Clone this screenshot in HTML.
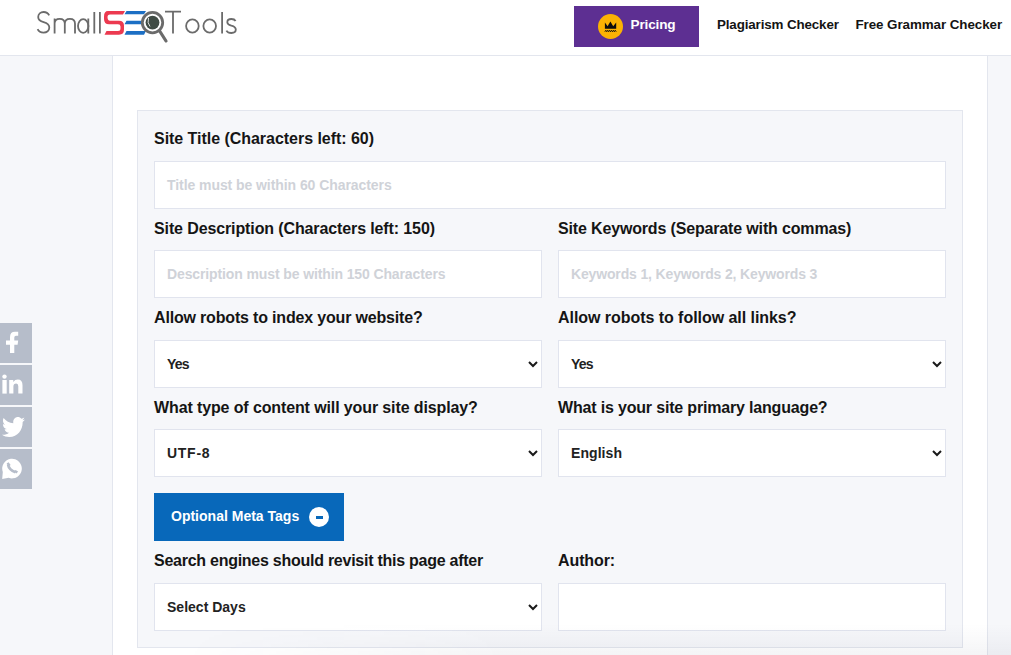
<!DOCTYPE html>
<html><head><meta charset="utf-8">
<style>
*{box-sizing:border-box;margin:0;padding:0}
html,body{width:1011px;height:655px;overflow:hidden;background:#f6f7fa;font-family:"Liberation Sans",sans-serif;color:#1b1b1b}
.abs{position:absolute}
#hdr{position:absolute;left:0;top:0;width:1011px;height:56px;background:#fff;border-bottom:1px solid #e3e6ee}
#main{position:absolute;left:112px;top:56px;width:876px;height:620px;background:#fff;border-left:1px solid #e3e6ee;border-right:1px solid #e3e6ee}
#box{position:absolute;left:137px;top:110px;width:826px;height:538px;background:#f6f7fa;border:1px solid #e3e6ee}
.lbl{position:absolute;font-weight:bold;font-size:16px;line-height:18px;color:#151515;white-space:nowrap}
.inp{position:absolute;width:388px;height:48px;background:#fff;border:1px solid #e1e4ee}
.inp.full{width:792px}
.ph{position:absolute;font-size:14px;font-weight:bold;color:#cfd2d8;white-space:nowrap;line-height:16px}
.val{position:absolute;font-size:14px;font-weight:bold;color:#222;white-space:nowrap;line-height:16px}
.btn{position:absolute;font-size:14px;font-weight:bold;color:#fff;white-space:nowrap;line-height:16px}
.prc{position:absolute;font-size:13.6px;font-weight:bold;color:#fff;white-space:nowrap;line-height:16px}
.soc{position:absolute;left:0;width:32px;height:40px;background:#b6bdca}
.nav{position:absolute;font-size:13.4px;font-weight:bold;color:#141414;white-space:nowrap;line-height:16px}
</style></head>
<body>
<div id="hdr">
  <svg class="abs" style="left:0;top:0" width="260" height="55" viewBox="0 0 260 55">
    <g fill="none" stroke="#6b6b6b" stroke-width="1.8" stroke-linecap="butt">
      <path d="M49.2 15.3 C48 13 46 12 43.6 12 C40.6 12 38.2 14 38.2 17 C38.2 20.3 40.8 21.4 43.6 22.1 C47 23 49.3 24.6 49.3 27.6 C49.3 30.7 46.8 32.6 43.6 32.6 C40.8 32.6 38.6 31.3 37.6 29.2"/>
      <path d="M54.6 33.5 V18.4 M54.6 23.6 C54.6 20.4 56.8 18.9 59.6 18.9 C62.6 18.9 64.8 20.6 64.8 23.8 V33.5 M64.8 23.8 C64.8 20.5 67.2 18.9 69.9 18.9 C72.9 18.9 75 20.6 75 23.8 V33.5"/>
      <ellipse cx="83.2" cy="26" rx="5.2" ry="6.8"/>
      <path d="M88.3 18.4 V33.5 M94.3 12 V33.5 M99.9 12 V33.5"/>
    </g>
    <!-- red S -->
    <path d="M108 11 H125 L123 14.5 H110 Q107.5 14.5 107.5 17 Q107.5 20.5 110 20.8 H119 Q124 20.8 124 25.5 V29.5 Q124 34.7 119 34.7 H104.5 L106.5 31 H118 Q120.5 31 120.5 28.5 V26.5 Q120.5 24.3 118 24.3 H109 Q104 24.3 104 19 V16.5 Q104 11 108 11Z" fill="#ec3a50"/>
    <!-- blue E bars -->
    <path d="M126.5 11 H146 L144 14.3 H124.5Z M126.5 20.8 H143 L142 24.3 H124.5Z M126.5 31 H146 L144 34.7 H124.5Z" fill="#1c6fc4"/>
    <!-- magnifier -->
    <line x1="159" y1="30" x2="166" y2="41" stroke="#6b6b6b" stroke-width="3.2" stroke-linecap="round"/>
    <circle cx="152.5" cy="22.6" r="10.2" fill="#fff" stroke="#6b6b6b" stroke-width="2.8"/>
    <circle cx="152.5" cy="22.6" r="6.9" fill="#3f4b44"/>
    <path d="M148.5 18 Q147 23 150 26.5" stroke="#fff" stroke-width="0.8" fill="none"/>
    <g fill="none" stroke="#6b6b6b" stroke-width="1.8">
      <path d="M165 11.7 H181 M173 11.7 V33.5 M222.1 12 V33.5"/>
      <ellipse cx="192.4" cy="26" rx="6.3" ry="6.6"/>
      <ellipse cx="209.7" cy="26" rx="6.3" ry="6.6"/>
      <path d="M235.6 21 C234.8 19.6 233.4 19 231.4 19 C229 19 227.3 20.2 227.3 22.2 C227.3 24.4 229.4 25 231.4 25.6 C234 26.3 235.8 27.2 235.8 29.6 C235.8 31.8 234 33 231.4 33 C229 33 227.2 32 226.4 30.6"/>
    </g>
  </svg>
  <div class="abs" style="left:574px;top:6px;width:125px;height:41px;background:#5d2f92"></div>
  <div class="abs" style="left:598px;top:14px;width:25px;height:25px;border-radius:50%;background:#fbb203"></div>
  <svg class="abs" style="left:603px;top:20px" width="15" height="13" viewBox="0 0 15 13">
    <path d="M1.9 2.6 L4.6 6.2 L7.4 1.6 L10.2 6.2 L13.2 2.6 V8.8 H1.9Z" fill="#0d0d0d"/>
    <path d="M1.9 11.7 l0.94 -1.4 l0.94 1.4 l0.94 -1.4 l0.94 1.4 l0.94 -1.4 l0.94 1.4 l0.94 -1.4 l0.94 1.4 l0.94 -1.4 l0.94 1.4 l0.94 -1.4 l0.94 1.4" stroke="#0d0d0d" stroke-width="1" fill="none"/>
  </svg>
</div>
<div id="main"></div>
<div id="box"></div>
<div class="inp" style="left:154px;top:161px;width:792px"></div>
<div class="inp" style="left:154px;top:250px;width:388px"></div>
<div class="inp" style="left:558px;top:250px;width:388px"></div>
<div class="inp" style="left:154px;top:340px;width:388px"></div>
<div class="inp" style="left:558px;top:340px;width:388px"></div>
<div class="inp" style="left:154px;top:429px;width:388px"></div>
<div class="inp" style="left:558px;top:429px;width:388px"></div>
<div class="inp" style="left:154px;top:583px;width:388px"></div>
<div class="inp" style="left:558px;top:583px;width:388px"></div>
<svg class="abs" style="left:528px;top:361px" width="10" height="7" viewBox="0 0 10 7"><path d="M1 1 L5 5 L9 1" stroke="#1a1a1a" stroke-width="2" fill="none"/></svg>
<svg class="abs" style="left:932px;top:361px" width="10" height="7" viewBox="0 0 10 7"><path d="M1 1 L5 5 L9 1" stroke="#1a1a1a" stroke-width="2" fill="none"/></svg>
<svg class="abs" style="left:528px;top:450px" width="10" height="7" viewBox="0 0 10 7"><path d="M1 1 L5 5 L9 1" stroke="#1a1a1a" stroke-width="2" fill="none"/></svg>
<svg class="abs" style="left:932px;top:450px" width="10" height="7" viewBox="0 0 10 7"><path d="M1 1 L5 5 L9 1" stroke="#1a1a1a" stroke-width="2" fill="none"/></svg>
<svg class="abs" style="left:528px;top:604px" width="10" height="7" viewBox="0 0 10 7"><path d="M1 1 L5 5 L9 1" stroke="#1a1a1a" stroke-width="2" fill="none"/></svg>
<div class="abs" style="left:154px;top:493px;width:190px;height:48px;background:#0868ba"></div>
<div class="abs" style="left:309px;top:507px;width:20px;height:20px;border-radius:50%;background:#fff"></div>
<div class="abs" style="left:315.7px;top:516.3px;width:7px;height:2.6px;background:#0868ba"></div>
<div id="l1" class="lbl" style="left:154.00px;top:130.00px;letter-spacing:-0.035px">Site Title (Characters left: 60)</div>
<div id="l2" class="lbl" style="left:154.00px;top:220.00px;letter-spacing:-0.116px">Site Description (Characters left: 150)</div>
<div id="l3" class="lbl" style="left:558.00px;top:220.00px;letter-spacing:-0.157px">Site Keywords (Separate with commas)</div>
<div id="l4" class="lbl" style="left:154.00px;top:309.00px;letter-spacing:-0.176px">Allow robots to index your website?</div>
<div id="l5" class="lbl" style="left:558.00px;top:309.00px;letter-spacing:-0.047px">Allow robots to follow all links?</div>
<div id="l6" class="lbl" style="left:154.00px;top:398.60px;letter-spacing:-0.119px">What type of content will your site display?</div>
<div id="l7" class="lbl" style="left:558.00px;top:398.60px;letter-spacing:-0.176px">What is your site primary language?</div>
<div id="l8" class="lbl" style="left:154.00px;top:552.30px;letter-spacing:-0.259px">Search engines should revisit this page after</div>
<div id="l9" class="lbl" style="left:558.00px;top:552.30px;letter-spacing:-0.100px">Author:</div>
<div id="p1" class="ph" style="left:167.00px;top:177.00px;letter-spacing:-0.067px">Title must be within 60 Characters</div>
<div id="p2" class="ph" style="left:167.00px;top:266.00px;letter-spacing:-0.117px">Description must be within 150 Characters</div>
<div id="p3" class="ph" style="left:571.00px;top:266.00px;letter-spacing:-0.152px">Keywords 1, Keywords 2, Keywords 3</div>
<div id="v1" class="val" style="left:167.00px;top:356.00px;letter-spacing:-0.800px">Yes</div>
<div id="v2" class="val" style="left:571.00px;top:356.00px;letter-spacing:-0.800px">Yes</div>
<div id="v3" class="val" style="left:167.00px;top:445.00px;letter-spacing:0.725px">UTF-8</div>
<div id="v4" class="val" style="left:571.00px;top:445.00px;letter-spacing:0.067px">English</div>
<div id="v5" class="val" style="left:167.00px;top:599.00px;letter-spacing:0.010px">Select Days</div>
<div id="b1" class="btn" style="left:171.00px;top:508.00px;letter-spacing:0.006px">Optional Meta Tags</div>
<div id="n1" class="nav" style="left:717.00px;top:16.50px;letter-spacing:-0.141px">Plagiarism Checker</div>
<div id="n2" class="nav" style="left:855.50px;top:16.50px;letter-spacing:-0.079px">Free Grammar Checker</div>
<div id="pr" class="prc" style="left:630.50px;top:17.00px;letter-spacing:-0.167px">Pricing</div>
<div class="soc" style="top:323px"><svg width="32" height="40" viewBox="0 0 32 40"><path d="M10 30 V21.8 H6 V17.6 H10 V14.2 Q10 8.8 15 8.8 H18.2 V12.8 H16 Q14.3 12.8 14.3 14.5 V17.6 H18.2 L17.6 21.8 H14.3 V30Z" fill="#fff"/></svg></div>
<div class="soc" style="top:365px"><svg width="32" height="40" viewBox="0 0 32 40"><circle cx="4.5" cy="11.6" r="2.2" fill="#fff"/><rect x="2.4" y="15" width="4.3" height="13.6" fill="#fff"/><path d="M9.2 15 H13.3 V16.9 Q14.8 14.6 17.8 14.6 Q22.5 14.6 22.5 20.2 V28.6 H18.3 V21.2 Q18.3 18.6 16.2 18.6 Q13.4 18.6 13.4 21.6 V28.6 H9.2Z" fill="#fff"/></svg></div>
<div class="soc" style="top:407px"><svg class="abs" style="left:2.3px;top:9.7px" width="23" height="20" viewBox="0 47 512 417" preserveAspectRatio="none"><path d="M459.37 151.716c.325 4.548.325 9.097.325 13.645 0 138.72-105.583 298.558-298.558 298.558-59.452 0-114.68-17.219-161.137-47.106 8.447.974 16.568 1.299 25.34 1.299 49.055 0 94.213-16.568 130.274-44.832-46.132-.975-84.792-31.188-98.112-72.772 6.498.974 12.995 1.624 19.818 1.624 9.421 0 18.843-1.3 27.614-3.573-48.081-9.747-84.143-51.980-84.143-102.985v-1.299c13.969 7.797 30.214 12.67 47.431 13.319-28.264-18.843-46.781-51.005-46.781-87.391 0-19.492 5.197-37.36 14.294-52.954 51.655 63.675 129.3 105.258 216.365 109.807-1.624-7.797-2.599-15.918-2.599-24.040 0-57.828 46.782-104.934 104.934-104.934 30.213 0 57.502 12.67 76.67 33.137 23.715-4.548 46.456-13.32 66.599-25.34-7.798 24.366-22.744 44.833-42.237 58.802 18.843-1.949 37.686-7.147 54.904-14.619-12.67 18.517-28.264 35.083-46.132 48.052z" fill="#fff"/></svg></div>
<div class="soc" style="top:449px"><svg width="32" height="40" viewBox="0 0 32 40"><path d="M8.65 28.8 A9.8 9.8 0 1 0 2.8 22.95 L2.2 30 Z" fill="#fff"/><g stroke="#b6bdca" fill="#b6bdca"><path d="M8 15.5 Q8.8 20.8 15.5 23.2" stroke-width="2.6" fill="none"/><path d="M6.6 14.6 L8.6 13.3 L10.6 16 L8.6 17.4Z" stroke="none"/><path d="M13.8 22.6 L15.6 20.9 L18.1 22.6 L16.5 24.6Z" stroke="none"/></g></svg></div>
<div class="abs" style="left:0;top:624px;width:1011px;height:31px;background:linear-gradient(to bottom,rgba(40,50,80,0),rgba(40,50,80,0.05));-webkit-mask-image:linear-gradient(to right,transparent 18%,#000 50%)"></div>
</body></html>
